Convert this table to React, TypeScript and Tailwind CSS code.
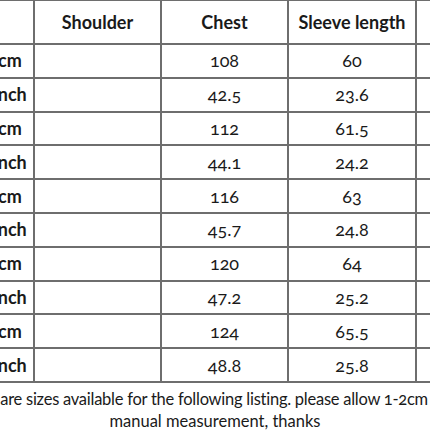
const rows: [string, string, string][] = [
  ["cm", "108", "60"],
  ["inch", "42.5", "23.6"],
  ["cm", "112", "61.5"],
  ["inch", "44.1", "24.2"],
  ["cm", "116", "63"],
  ["inch", "45.7", "24.8"],
  ["cm", "120", "64"],
  ["inch", "47.2", "25.2"],
  ["cm", "124", "65.5"],
  ["inch", "48.8", "25.8"],
];

const cell = "border-2 border-[#6e6e6e] text-center align-middle p-0";

export default function App() {
  return (
    <div className="w-[430px] h-[430px] overflow-hidden bg-white text-[#1a1a1a] font-['Lato','Open_Sans',sans-serif]">
      <div className="-ml-[15px] -mt-[1px] w-[560px]">
        <table className="table-fixed border-collapse w-[560px]">
          <colgroup>
            <col className="w-[48px]" />
            <col className="w-[127px]" />
            <col className="w-[127px]" />
            <col className="w-[128px]" />
            <col className="w-[130px]" />
          </colgroup>
          <thead>
            <tr className="h-[44px]">
              <th className={cell}></th>
              <th className={`${cell} text-[18px] font-bold`}>Shoulder</th>
              <th className={`${cell} text-[18px] font-bold`}>Chest</th>
              <th className={`${cell} text-[18px] font-bold`}>Sleeve length</th>
              <th className={cell}></th>
            </tr>
          </thead>
          <tbody>
            {rows.map((r, i) => (
              <tr key={i} className="h-[33.8px]">
                <td className={`${cell} text-[18px] font-bold`}>{r[0]}</td>
                <td className={cell}></td>
                <td className={`${cell} text-[18px] oldstyle-nums`}>{r[1]}</td>
                <td className={`${cell} text-[18px] oldstyle-nums`}>{r[2]}</td>
                <td className={cell}></td>
              </tr>
            ))}
          </tbody>
        </table>
      </div>
      <div className="w-[430px] border-b-2 border-[#6e6e6e] pt-[5px] pb-[1px] text-[16.5px] leading-[22px] text-center oldstyle-nums">
        <div className="flex justify-center whitespace-nowrap tracking-[-0.25px]">
          <span className="pr-[8px]">There are sizes available for the following listing. please allow 1-2cm error</span>
        </div>
        <div>manual measurement, thanks</div>
      </div>
    </div>
  );
}
